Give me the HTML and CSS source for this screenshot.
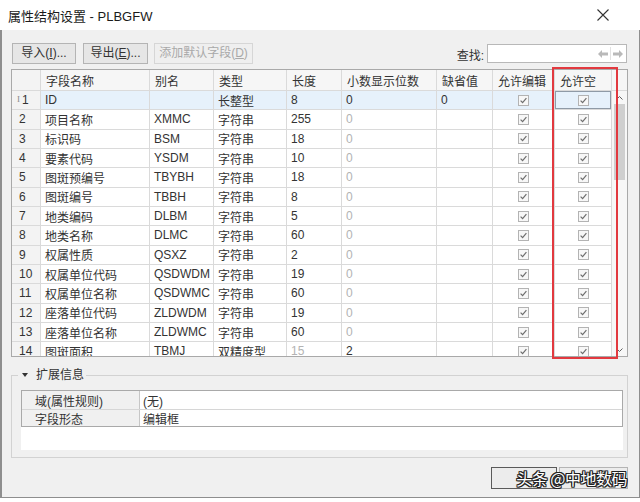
FILE: index.html
```html
<!DOCTYPE html>
<html lang="zh">
<head>
<meta charset="utf-8">
<title>属性结构设置</title>
<link rel="stylesheet" href="styles.css">
</head>
<body>
<svg class="defs" width="0" height="0" aria-hidden="true">
  <symbol id="cb" viewBox="0 0 11 11">
    <rect x="0.5" y="0.5" width="10" height="10" fill="#f7f7f7" stroke="#b3b3b3"/>
    <path d="M2.6 5.6 L4.6 7.6 L8.4 3.2" fill="none" stroke="#6e6e6e" stroke-width="1.2"/>
  </symbol>
</svg>
<div class="window">
  <div class="titlebar">
    <span class="title">属性结构设置 - PLBGFW</span>
    <svg class="close" width="12" height="12" viewBox="0 0 12 12"><path d="M0.5 0.5 L11.5 11.5 M11.5 0.5 L0.5 11.5" stroke="#333" stroke-width="1.1" fill="none"/></svg>
  </div>
  <div class="client">
    <div class="toolbar">
      <button class="btn btn-import">导入(<u>I</u>)...</button>
      <button class="btn btn-export">导出(<u>E</u>)...</button>
      <button class="btn btn-add disabled">添加默认字段(<u>D</u>)</button>
      <div class="find">
        <span class="find-label">查找:</span>
        <div class="find-input">
          <svg class="arrow" width="10" height="8" viewBox="0 0 10 8"><path d="M0 4 L4 0 L4 2.5 L10 2.5 L10 5.5 L4 5.5 L4 8 Z" fill="#b9b9b9"/></svg>
          <span class="arrow-sep"></span>
          <svg class="arrow" width="10" height="8" viewBox="0 0 10 8"><path d="M10 4 L6 0 L6 2.5 L0 2.5 L0 5.5 L6 5.5 L6 8 Z" fill="#b9b9b9"/></svg>
        </div>
      </div>
    </div>

    <div class="grid">
      <div class="row head">
        <div class="cell rh"></div>
        <div class="cell">字段名称</div>
        <div class="cell">别名</div>
        <div class="cell">类型</div>
        <div class="cell">长度</div>
        <div class="cell">小数显示位数</div>
        <div class="cell">缺省值</div>
        <div class="cell">允许编辑</div>
        <div class="cell">允许空</div>
        <div class="cell sc"></div>
      </div>
      <div class="grid-body">
        <div class="rows">
          <div class="row sel">
            <div class="cell rh"><span class="ibeam">I</span>1</div>
            <div class="cell">ID</div>
            <div class="cell"></div>
            <div class="cell">长整型</div>
            <div class="cell">8</div>
            <div class="cell">0</div>
            <div class="cell">0</div>
            <div class="cell ck"><svg class="cbx"><use href="#cb"/></svg></div>
            <div class="cell ck focus"><svg class="cbx"><use href="#cb"/></svg></div>
          </div>
          <div class="row">
            <div class="cell rh">2</div><div class="cell">项目名称</div><div class="cell">XMMC</div><div class="cell">字符串</div><div class="cell">255</div><div class="cell dim">0</div><div class="cell"></div>
            <div class="cell ck"><svg class="cbx"><use href="#cb"/></svg></div><div class="cell ck"><svg class="cbx"><use href="#cb"/></svg></div>
          </div>
          <div class="row">
            <div class="cell rh">3</div><div class="cell">标识码</div><div class="cell">BSM</div><div class="cell">字符串</div><div class="cell">18</div><div class="cell dim">0</div><div class="cell"></div>
            <div class="cell ck"><svg class="cbx"><use href="#cb"/></svg></div><div class="cell ck"><svg class="cbx"><use href="#cb"/></svg></div>
          </div>
          <div class="row">
            <div class="cell rh">4</div><div class="cell">要素代码</div><div class="cell">YSDM</div><div class="cell">字符串</div><div class="cell">10</div><div class="cell dim">0</div><div class="cell"></div>
            <div class="cell ck"><svg class="cbx"><use href="#cb"/></svg></div><div class="cell ck"><svg class="cbx"><use href="#cb"/></svg></div>
          </div>
          <div class="row">
            <div class="cell rh">5</div><div class="cell">图斑预编号</div><div class="cell">TBYBH</div><div class="cell">字符串</div><div class="cell">18</div><div class="cell dim">0</div><div class="cell"></div>
            <div class="cell ck"><svg class="cbx"><use href="#cb"/></svg></div><div class="cell ck"><svg class="cbx"><use href="#cb"/></svg></div>
          </div>
          <div class="row">
            <div class="cell rh">6</div><div class="cell">图斑编号</div><div class="cell">TBBH</div><div class="cell">字符串</div><div class="cell">8</div><div class="cell dim">0</div><div class="cell"></div>
            <div class="cell ck"><svg class="cbx"><use href="#cb"/></svg></div><div class="cell ck"><svg class="cbx"><use href="#cb"/></svg></div>
          </div>
          <div class="row">
            <div class="cell rh">7</div><div class="cell">地类编码</div><div class="cell">DLBM</div><div class="cell">字符串</div><div class="cell">5</div><div class="cell dim">0</div><div class="cell"></div>
            <div class="cell ck"><svg class="cbx"><use href="#cb"/></svg></div><div class="cell ck"><svg class="cbx"><use href="#cb"/></svg></div>
          </div>
          <div class="row">
            <div class="cell rh">8</div><div class="cell">地类名称</div><div class="cell">DLMC</div><div class="cell">字符串</div><div class="cell">60</div><div class="cell dim">0</div><div class="cell"></div>
            <div class="cell ck"><svg class="cbx"><use href="#cb"/></svg></div><div class="cell ck"><svg class="cbx"><use href="#cb"/></svg></div>
          </div>
          <div class="row">
            <div class="cell rh">9</div><div class="cell">权属性质</div><div class="cell">QSXZ</div><div class="cell">字符串</div><div class="cell">2</div><div class="cell dim">0</div><div class="cell"></div>
            <div class="cell ck"><svg class="cbx"><use href="#cb"/></svg></div><div class="cell ck"><svg class="cbx"><use href="#cb"/></svg></div>
          </div>
          <div class="row">
            <div class="cell rh">10</div><div class="cell">权属单位代码</div><div class="cell">QSDWDM</div><div class="cell">字符串</div><div class="cell">19</div><div class="cell dim">0</div><div class="cell"></div>
            <div class="cell ck"><svg class="cbx"><use href="#cb"/></svg></div><div class="cell ck"><svg class="cbx"><use href="#cb"/></svg></div>
          </div>
          <div class="row">
            <div class="cell rh">11</div><div class="cell">权属单位名称</div><div class="cell">QSDWMC</div><div class="cell">字符串</div><div class="cell">60</div><div class="cell dim">0</div><div class="cell"></div>
            <div class="cell ck"><svg class="cbx"><use href="#cb"/></svg></div><div class="cell ck"><svg class="cbx"><use href="#cb"/></svg></div>
          </div>
          <div class="row">
            <div class="cell rh">12</div><div class="cell">座落单位代码</div><div class="cell">ZLDWDM</div><div class="cell">字符串</div><div class="cell">19</div><div class="cell dim">0</div><div class="cell"></div>
            <div class="cell ck"><svg class="cbx"><use href="#cb"/></svg></div><div class="cell ck"><svg class="cbx"><use href="#cb"/></svg></div>
          </div>
          <div class="row">
            <div class="cell rh">13</div><div class="cell">座落单位名称</div><div class="cell">ZLDWMC</div><div class="cell">字符串</div><div class="cell">60</div><div class="cell dim">0</div><div class="cell"></div>
            <div class="cell ck"><svg class="cbx"><use href="#cb"/></svg></div><div class="cell ck"><svg class="cbx"><use href="#cb"/></svg></div>
          </div>
          <div class="row">
            <div class="cell rh">14</div><div class="cell">图斑面积</div><div class="cell">TBMJ</div><div class="cell">双精度型</div><div class="cell dim">15</div><div class="cell">2</div><div class="cell"></div>
            <div class="cell ck"><svg class="cbx"><use href="#cb"/></svg></div><div class="cell ck"><svg class="cbx"><use href="#cb"/></svg></div>
          </div>
        </div>
        <div class="vscroll">
          <div class="sarrow"><svg width="7" height="4" viewBox="0 0 7 4"><path d="M0.5 3.5 L3.5 0.5 L6.5 3.5" fill="none" stroke="#606060" stroke-width="1"/></svg></div>
          <div class="thumb"></div>
          <div class="strack"></div>
          <div class="sarrow"><svg width="7" height="4" viewBox="0 0 7 4"><path d="M0.5 0.5 L3.5 3.5 L6.5 0.5" fill="none" stroke="#606060" stroke-width="1"/></svg></div>
        </div>
      </div>
      <div class="mark"></div>
    </div>

    <fieldset class="ext">
      <legend class="ext-title"><svg class="tri" width="6" height="4" viewBox="0 0 6 4"><path d="M0 0 L6 0 L3 4 Z" fill="#333"/></svg>扩展信息</legend>
      <div class="panel">
        <div class="props">
          <div class="prow"><div class="pkey">域(属性规则)</div><div class="pval">(无)</div></div>
          <div class="prow"><div class="pkey">字段形态</div><div class="pval">编辑框</div></div>
        </div>
      </div>
    </fieldset>

    <div class="footer">
      <button class="btn fbtn fbtn-ok"></button>
      <button class="btn fbtn fbtn-cancel"></button>
      <span class="watermark">头条 @中地数码</span>
    </div>
  </div>
</div>
</body>
</html>
```

FILE: styles.css
```css
* { box-sizing: border-box; }
html, body { margin: 0; padding: 0; }
body {
  width: 640px;
  height: 502px;
  overflow: hidden;
  background: #fff;
  font-family: "Liberation Sans", "Noto Sans CJK SC", sans-serif;
  font-size: 12px;
  color: #333;
}
.defs { position: absolute; width: 0; height: 0; }

.window { width: 640px; height: 502px; background: #fff; }

.titlebar {
  height: 30px;
  display: flex;
  align-items: center;
  justify-content: space-between;
  padding: 0 31px 0 8px;
}
.title { font-size: 13px; color: #1a1a1a; }
.close { display: block; }

.client {
  height: 468px;
  background: #f0f0f0;
  border: solid #8e8e8e;
  border-width: 0 1px 1px 2px;
  padding: 13px 11px 0 9px;
  display: flex;
  flex-direction: column;
}

/* toolbar */
.toolbar {
  height: 21px;
  display: flex;
  align-items: center;
  padding: 0 1px;
}
.btn {
  height: 21px;
  padding: 0;
  margin: 0;
  font: inherit;
  font-size: 12px;
  color: #333;
  background: #e6e6e6;
  border: 1px solid #b4b4b4;
  border-radius: 0;
  line-height: 19px;
}
.btn-import { width: 64px; }
.btn-export { width: 65px; margin-left: 7px; }
.btn-add { width: 99px; margin-left: 6px; }
.btn.disabled { background: #efefef; border-color: #d6d6d6; color: #a9a9a9; }

.find { margin-left: auto; display: flex; align-items: center; height: 21px; }
.find-label { margin-right: 3px; color: #333; padding-top: 1px; }
.find-input {
  width: 140px;
  height: 19px;
  background: #fff;
  border: 1px solid #b8b8b8;
  display: flex;
  align-items: center;
  justify-content: flex-end;
  padding-right: 3px;
}
.arrow { display: block; }
.arrow-sep { width: 1px; height: 13px; background: #e2e2e2; margin: 0 2px; }

/* grid */
.grid {
  margin-top: 5px;
  height: 288px;
  border: 1px solid #a9a9a9;
  background: #fff;
  position: relative;
  display: flex;
  flex-direction: column;
}
.row {
  display: grid;
  grid-template-columns: 29px 109px 64px 73px 55px 95px 56px 62px 57px;
  height: 19.33px;
  flex: none;
}
.row.head {
  grid-template-columns: 29px 109px 64px 73px 55px 95px 56px 62px 57px 15px;
  height: 21px;
  background: #f6f6f6;
}
.cell {
  border-right: 1px solid #dadada;
  border-bottom: 1px solid #dadada;
  padding-left: 4px;
  white-space: nowrap;
  overflow: hidden;
  display: flex;
  align-items: center;
  color: #333;
}
.head .cell { padding-left: 5px; color: #333; }
.head .cell.sc { border-right: 0; }
.cell.rh { background: #f3f3f3; padding-left: 7px; }
.cell.dim { color: #b3b3b3; }
.cell.ck { justify-content: center; padding-left: 0; }
.cbx { width: 11px; height: 11px; display: block; }
.row.sel .cell:not(.rh) { background: #e6f1fb; }
.cell.focus { box-shadow: inset 0 0 0 1px #8f9aa6; }
.ibeam {
  font-family: "Liberation Serif", serif;
  font-size: 9px;
  color: #8a8a8a;
  margin-right: 2px;
  margin-left: -2px;
  align-self: flex-start;
  margin-top: 3px;
}

.grid-body { flex: 1; display: flex; overflow: hidden; }
.rows { width: 600px; overflow: hidden; }
.vscroll {
  width: 15px;
  background: #f7f7f7;
  display: flex;
  flex-direction: column;
}
.sarrow { height: 13px; display: flex; align-items: center; justify-content: center; }
.sarrow svg { display: block; }
.thumb { height: 76px; margin: 0 2px 0 2px; background: #cfcfcf; }
.strack { flex: 1; }

.mark {
  position: absolute;
  left: 540px;
  top: -3px;
  width: 66px;
  height: 292px;
  border: 2px solid #e2393f;
  pointer-events: none;
}

/* extension group */
.ext {
  margin: 10px 0 0 0;
  border: 1px solid #d2d2d2;
  padding: 7px 4px 7px 9px;
  min-width: 0;
}
.ext-title {
  padding: 0 2px 0 4px;
  margin-left: -3px;
  line-height: 16px;
  font-size: 12px;
  color: #333;
}
.tri { display: inline-block; vertical-align: middle; margin-right: 8px; margin-top: -2px; }
.panel { height: 60px; background: #fff; }
.props { border: 1px solid #a9a9a9; }
.prow { display: flex; height: 18px; }
.prow + .prow { border-top: 1px solid #d6d6d6; height: 17px; }
.pkey {
  width: 118px;
  background: #f0f0f0;
  border-right: 1px solid #c6c6c6;
  padding-left: 13px;
  display: flex;
  align-items: center;
}
.pval { padding-left: 3px; display: flex; align-items: center; }

/* footer */
.footer {
  margin-top: 9px;
  height: 22px;
  display: flex;
  justify-content: flex-end;
  position: relative;
}
.fbtn { height: 22px; background: #ececec; }
.fbtn-ok { width: 66px; border-color: #5a5a5a; }
.fbtn-cancel { width: 69px; margin-left: 2px; }
.watermark {
  position: absolute;
  right: 1px;
  top: 1px;
  font-family: "Noto Sans CJK SC", sans-serif;
  font-size: 16px;
  line-height: 20px;
  color: #fff;
  letter-spacing: -0.5px;
  text-shadow: 1px 0 0 #222, -1px 0 0 #222, 0 1px 0 #222, 0 -1px 0 #222,
               1px 1px 0 #222, -1px -1px 0 #222, 1px -1px 0 #222, -1px 1px 0 #222;
}
```
